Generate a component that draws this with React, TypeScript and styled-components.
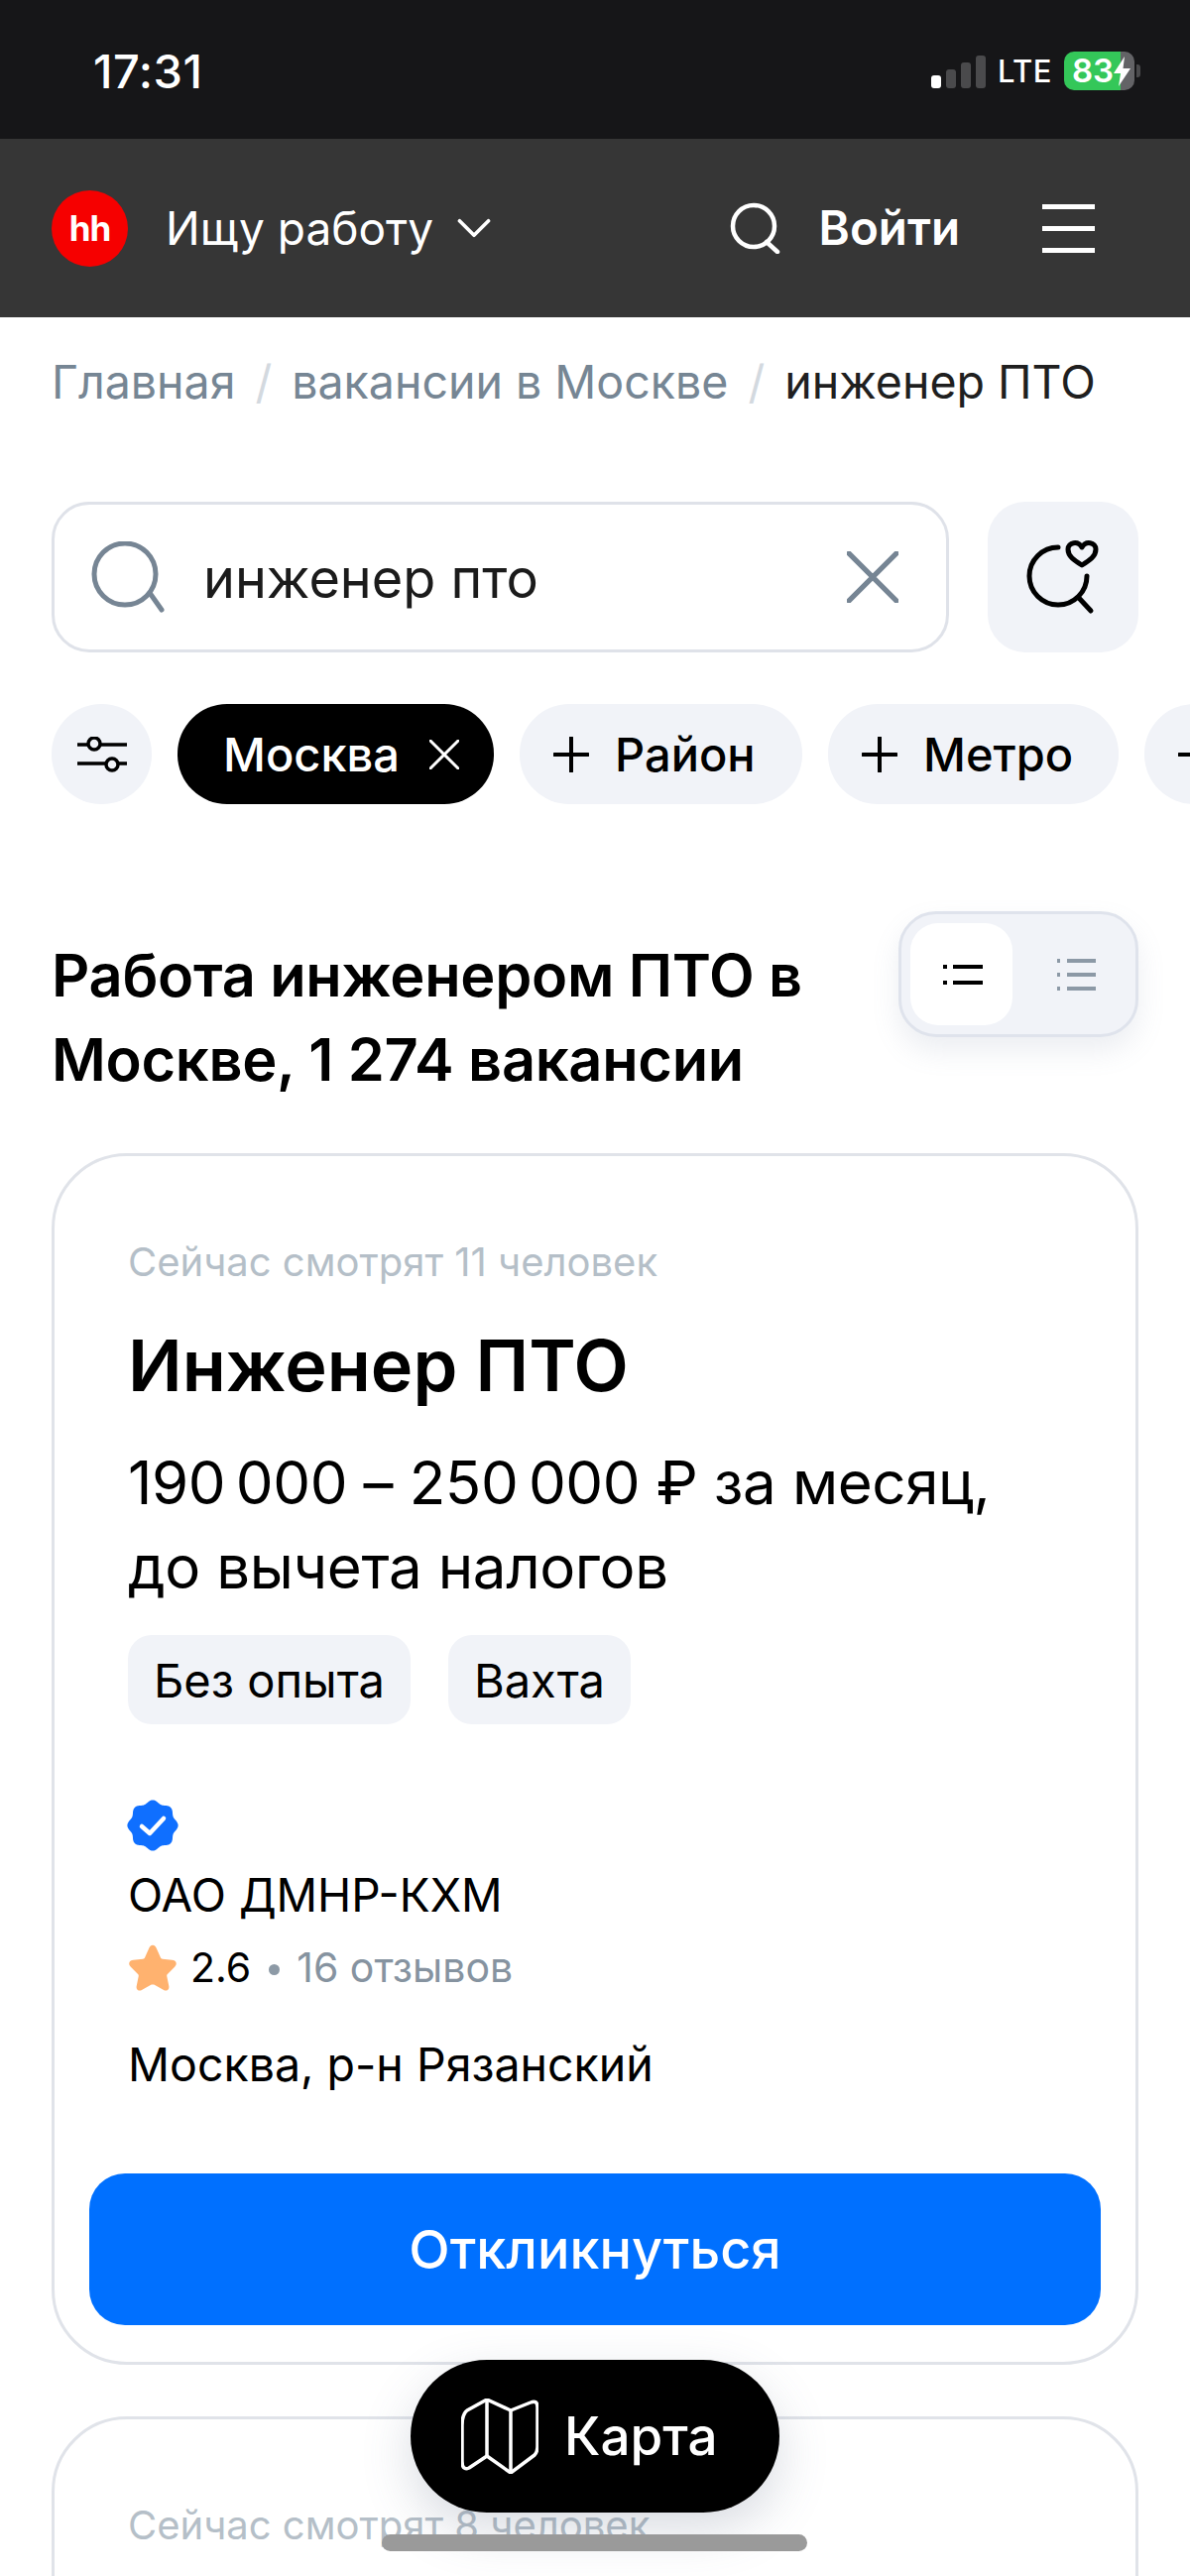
import React from "react";
import styled, { createGlobalStyle } from "styled-components";

const Global = createGlobalStyle`
  html, body { margin: 0; padding: 0; background: #fff; }
  * { box-sizing: border-box; }
`;

const Screen = styled.div`
  position: relative;
  width: 1200px;
  height: 2598px;
  overflow: hidden;
  background: #fff;
  color: #000;
  font-family: Inter, "Liberation Sans", sans-serif;
`;

const StatusBar = styled.div`
  height: 140px;
  background: #161618;
  color: #fff;
  display: flex;
  align-items: center;
  justify-content: space-between;
  padding: 0 50px 0 94px;
`;
const Time = styled.div`
  font-size: 47px;
  font-weight: 500;
  letter-spacing: 0.5px;
  line-height: 1;
  margin-top: 3px;
`;
const StatusRight = styled.div`
  display: flex;
  align-items: center;
  margin-top: 3px;
`;
const Bars = styled.div`
  display: flex;
  align-items: flex-end;
  gap: 5px;
  height: 34px;
  margin-right: 12px;
`;
const Bar = styled.div<{ $h: number; $on?: boolean }>`
  width: 10px;
  height: ${(p) => p.$h}px;
  border-radius: 3px;
  background: ${(p) => (p.$on ? "#fff" : "#4a4a4c")};
`;
const Lte = styled.div`
  font-size: 31px;
  font-weight: 500;
  letter-spacing: 0.5px;
  margin-right: 12px;
  line-height: 1;
`;
const Battery = styled.div`
  width: 71px;
  height: 39px;
  border-radius: 10px;
  background: linear-gradient(90deg, #34c759 0 57px, #636366 57px);
  display: flex;
  align-items: center;
  padding-left: 8px;
  font-size: 33px;
  font-weight: 600;
  line-height: 1;
`;
const BatteryNub = styled.div`
  width: 4px;
  height: 13px;
  margin-left: 2px;
  border-radius: 0 3px 3px 0;
  background: #4a4a4c;
`;

const NavBar = styled.header`
  height: 180px;
  background: #363636;
  color: #fff;
  display: flex;
  align-items: center;
  padding: 0 96px 0 52px;
`;
const Logo = styled.div`
  width: 77px;
  height: 77px;
  border-radius: 50%;
  background: #f60000;
  display: flex;
  align-items: center;
  justify-content: center;
  font-size: 35px;
  font-weight: 700;
  letter-spacing: -1px;
  margin-right: 38px;
`;
const NavLabel = styled.div`
  font-size: 46px;
  font-weight: 400;
  line-height: 1;
  margin-right: 24px;
`;
const NavRight = styled.div`
  margin-left: auto;
  display: flex;
  align-items: center;
`;
const Login = styled.div`
  font-size: 47.5px;
  font-weight: 600;
  line-height: 1;
  margin: 0 83px 0 38px;
`;
const Burger = styled.div`
  width: 53px;
  display: flex;
  flex-direction: column;
  gap: 17px;
`;
const BurgerLine = styled.div`
  height: 5px;
  background: #fff;
`;

const Crumbs = styled.nav`
  display: flex;
  align-items: center;
  padding: 36px 0 0 52px;
  height: 94px;
  font-size: 46.5px;
  line-height: 58px;
  white-space: nowrap;
`;
const Crumb = styled.span<{ $current?: boolean }>`
  color: ${(p) => (p.$current ? "#1f1f1f" : "#768694")};
`;
const CrumbSep = styled.span`
  color: #d3d9df;
  margin: 0 20px;
`;

const SearchRow = styled.div`
  display: flex;
  gap: 39px;
  padding: 92px 52px 0 52px;
`;
const SearchField = styled.div`
  flex: 1;
  height: 152px;
  border: 3px solid #dfe2e9;
  border-radius: 38px;
  display: flex;
  align-items: center;
  padding: 0 48px 0 37px;
`;
const SearchText = styled.div`
  flex: 1;
  margin-left: 39px;
  padding-top: 4px;
  font-size: 54px;
  line-height: 1;
  color: #1b1b1b;
`;
const FavButton = styled.div`
  width: 152px;
  height: 152px;
  border-radius: 38px;
  background: #f1f3f8;
  display: flex;
  align-items: center;
  justify-content: center;
`;

const Chips = styled.div`
  display: flex;
  gap: 26px;
  padding: 52px 0 0 52px;
  white-space: nowrap;
`;
const IconChip = styled.div`
  flex: none;
  width: 101px;
  height: 101px;
  border-radius: 50px;
  background: #f1f3f8;
  display: flex;
  align-items: center;
  justify-content: center;
`;
const Chip = styled.div<{ $dark?: boolean; $w: number }>`
  flex: none;
  width: ${(p) => p.$w}px;
  height: 101px;
  border-radius: 50px;
  background: ${(p) => (p.$dark ? "#000" : "#f1f3f8")};
  color: ${(p) => (p.$dark ? "#fff" : "#000")};
  display: flex;
  align-items: center;
  gap: ${(p) => (p.$dark ? 30 : 26)}px;
  padding-left: ${(p) => (p.$dark ? 46 : 34)}px;
  font-size: 47px;
  font-weight: 500;
  line-height: 1;
`;

const HeadingRow = styled.div`
  display: flex;
  justify-content: space-between;
  padding: 108px 52px 0 52px;
`;
const Heading = styled.h1`
  margin: 22px 0 0;
  font-size: 59.5px;
  font-weight: 600;
  line-height: 85px;
  letter-spacing: -0.3px;
`;
const ViewSwitch = styled.div`
  width: 242px;
  height: 127px;
  border: 3px solid #dfe3ec;
  border-radius: 38px;
  background: #f1f3f8;
  padding: 9px;
  display: flex;
  box-shadow: 0 14px 28px rgba(120, 135, 165, 0.14);
`;
const ViewOption = styled.div<{ $active?: boolean }>`
  flex: none;
  width: ${(p) => (p.$active ? 103 : 115)}px;
  height: 103px;
  border-radius: 28px;
  background: ${(p) => (p.$active ? "#fff" : "transparent")};
  display: flex;
  align-items: center;
  justify-content: ${(p) => (p.$active ? "center" : "flex-end")};
  padding: ${(p) => (p.$active ? "0 0 0 3px" : "0 31px 0 0")};
`;

const Cards = styled.div`
  display: flex;
  flex-direction: column;
  gap: 52px;
  padding: 52px 52px 0 52px;
`;
const Card = styled.article<{ $tail?: boolean }>`
  border: 3px solid #e0e3e9;
  border-radius: 76px;
  padding: 84px 35px 37px;
  flex: none;
  min-height: ${(p) => (p.$tail ? "400px" : "0")};
`;
const CardBody = styled.div`
  padding: 0 0 0 39px;
`;
const Watching = styled.div`
  font-size: 40px;
  line-height: 46px;
  color: #b5bfc8;
`;
const Title = styled.h2`
  margin: 37px 0 0;
  font-size: 72px;
  font-weight: 600;
  line-height: 88px;
`;
const Salary = styled.div`
  margin-top: 32px;
  font-size: 60px;
  line-height: 85px;
  font-weight: 400;
  letter-spacing: -0.4px;
`;
const Tags = styled.div`
  display: flex;
  gap: 38px;
  margin-top: 26px;
`;
const Tag = styled.div`
  height: 90px;
  border-radius: 24px;
  background: #f1f3f8;
  padding: 0 26px;
  display: flex;
  align-items: center;
  font-size: 47px;
  line-height: 1;
`;
const Verified = styled.svg`
  display: block;
  margin-top: 76px;
  margin-left: -1px;
`;
const Company = styled.div`
  margin-top: 16px;
  font-size: 46px;
  line-height: 56px;
`;
const RatingRow = styled.div`
  display: flex;
  align-items: center;
  margin-top: 17px;
  margin-left: -1px;
  height: 56px;
  font-size: 41px;
  line-height: 1;
`;
const RatingValue = styled.span`
  margin-left: 12px;
`;
const RatingDot = styled.span`
  width: 11px;
  height: 11px;
  border-radius: 50%;
  background: #8d9aa6;
  margin: 4px 17px 0 18px;
`;
const Reviews = styled.span`
  color: #8693a0;
`;
const Location = styled.div`
  margin-top: 42px;
  font-size: 46.5px;
  line-height: 56px;
`;
const Apply = styled.div`
  margin-top: 82px;
  height: 153px;
  border-radius: 36px;
  background: #0070ff;
  color: #fff;
  display: flex;
  align-items: center;
  justify-content: center;
  font-size: 54px;
  font-weight: 500;
  line-height: 1;
`;

const MapPill = styled.div`
  position: absolute;
  left: 414px;
  top: 2380px;
  width: 372px;
  height: 154px;
  border-radius: 77px;
  background: #000;
  color: #fff;
  display: flex;
  align-items: center;
  gap: 26px;
  padding-left: 51px;
  font-size: 53px;
  font-weight: 500;
  box-shadow: 0 18px 50px rgba(80, 95, 125, 0.22);
`;
const HomeIndicator = styled.div`
  position: absolute;
  left: 385px;
  top: 2556px;
  width: 429px;
  height: 17px;
  border-radius: 9px;
  background: #9a9a9a;
`;

function scallopPath(cx: number, cy: number, r: number, amp: number, n: number) {
  const pts: string[] = [];
  for (let i = 0; i <= 240; i++) {
    const a = (i / 240) * Math.PI * 2 - Math.PI / 2;
    const rr = r + amp * Math.cos(n * (a + Math.PI / 2));
    pts.push(`${(cx + rr * Math.cos(a)).toFixed(2)} ${(cy + rr * Math.sin(a)).toFixed(2)}`);
  }
  return "M" + pts.join("L") + "Z";
}

const Cross = ({ size, color, width }: { size: number; color: string; width: number }) => (
  <svg width={size} height={size} viewBox="0 0 50 50" fill="none">
    <path d="M2 2L48 48M48 2L2 48" stroke={color} strokeWidth={width} strokeLinecap="round" />
  </svg>
);
const Plus = () => (
  <svg width={36} height={36} viewBox="0 0 36 36" fill="none">
    <path d="M18 1V35M1 18H35" stroke="#000" strokeWidth={4} strokeLinecap="round" />
  </svg>
);

export default function App() {
  return (
    <Screen>
      <Global />
      <StatusBar>
        <Time>17:31</Time>
        <StatusRight>
          <Bars>
            <Bar $h={13} $on />
            <Bar $h={19} />
            <Bar $h={26} />
            <Bar $h={33} />
          </Bars>
          <Lte>LTE</Lte>
          <Battery>
            83
            <svg width={17} height={30} viewBox="0 0 17 30">
              <path d="M11 0L0 17H7L5 30L17 12H9.5Z" fill="#fff" />
            </svg>
          </Battery>
          <BatteryNub />
        </StatusRight>
      </StatusBar>

      <NavBar>
        <Logo>hh</Logo>
        <NavLabel>Ищу работу</NavLabel>
        <svg width={34} height={20} viewBox="0 0 36 22" fill="none">
          <path d="M2 3L18 19L34 3" stroke="#fff" strokeWidth={4} strokeLinecap="round" strokeLinejoin="round" />
        </svg>
        <NavRight>
          <svg width={52} height={52} viewBox="0 0 52 52" fill="none">
            <circle cx="24" cy="24" r="21" stroke="#fff" strokeWidth={4.5} />
            <path d="M37 40L48 50" stroke="#fff" strokeWidth={4.5} strokeLinecap="round" />
          </svg>
          <Login>Войти</Login>
          <Burger>
            <BurgerLine />
            <BurgerLine />
            <BurgerLine />
          </Burger>
        </NavRight>
      </NavBar>

      <Crumbs>
        <Crumb>Главная</Crumb>
        <CrumbSep>/</CrumbSep>
        <Crumb>вакансии в Москве</Crumb>
        <CrumbSep>/</CrumbSep>
        <Crumb $current>инженер ПТО</Crumb>
      </Crumbs>

      <SearchRow>
        <SearchField>
          <svg width={74} height={72} viewBox="0 0 74 72" fill="none">
            <circle cx="34" cy="33" r="31" stroke="#768594" strokeWidth={5} />
            <path d="M59 52L71 69" stroke="#768594" strokeWidth={5} strokeLinecap="round" />
          </svg>
          <SearchText>инженер пто</SearchText>
          <Cross size={52} color="#768594" width={5} />
        </SearchField>
        <FavButton>
          <svg width={76} height={76} viewBox="0 0 76 76" fill="none">
            <path
              d="M33 8A29 29 0 1 0 62 37M53 58L66 72"
              stroke="#000"
              strokeWidth={5}
              strokeLinecap="round"
            />
            <path
              d="M57 26C49 21 43 17 43 10C43 3 53 1 57 8C61 1 71 3 71 10C71 17 65 21 57 26Z"
              stroke="#000"
              strokeWidth={5}
              strokeLinejoin="round"
            />
          </svg>
        </FavButton>
      </SearchRow>

      <Chips>
        <IconChip>
          <svg width={50} height={36} viewBox="0 0 50 36" fill="none" stroke="#000" strokeWidth={3.5}>
            <path d="M0 8H10M24 8H50M0 27H28M42 27H50" />
            <circle cx="17" cy="7" r="6" />
            <circle cx="35" cy="28" r="6" />
          </svg>
        </IconChip>
        <Chip $dark $w={319}>
          Москва
          <Cross size={30} color="#fff" width={5} />
        </Chip>
        <Chip $w={285}>
          <Plus />
          Район
        </Chip>
        <Chip $w={293}>
          <Plus />
          Метро
        </Chip>
        <Chip $w={240}>
          <Plus />
        </Chip>
      </Chips>

      <HeadingRow>
        <Heading>
          Работа инженером ПТО в
          <br />
          Москве, 1 274 вакансии
        </Heading>
        <ViewSwitch>
          <ViewOption $active>
            <svg width={42} height={24} viewBox="0 0 42 24" fill="none" stroke="#000" strokeWidth={4}>
              <path d="M11 4H41M11 20H41M1 4H5M1 20H5" />
            </svg>
          </ViewOption>
          <ViewOption>
            <svg width={40} height={34} viewBox="0 0 40 34" fill="none" stroke="#8c99a6" strokeWidth={4}>
              <path d="M11 3H40M11 17H40M11 31H40M1 3H4M1 17H4M1 31H4" />
            </svg>
          </ViewOption>
        </ViewSwitch>
      </HeadingRow>

      <Cards>
        <Card>
          <CardBody>
            <Watching>Сейчас смотрят 11 человек</Watching>
            <Title>Инженер ПТО</Title>
            <Salary>
              190{"\u2009"}000 – 250{"\u2009"}000 ₽ за месяц,
              <br />
              до вычета налогов
            </Salary>
            <Tags>
              <Tag>Без опыта</Tag>
              <Tag>Вахта</Tag>
            </Tags>
            <Verified width={52} height={52} viewBox="0 0 52 52">
              <path d={scallopPath(26, 26, 24, 1.6, 8)} fill="#0f6fff" />
              <path d="M15 27L23 34L37 19" fill="none" stroke="#fff" strokeWidth={4.5} strokeLinecap="round" strokeLinejoin="round" />
            </Verified>
            <Company>ОАО ДМНР-КХМ</Company>
            <RatingRow>
              <svg width={52} height={50} viewBox="0 0 24 23">
                <path
                  d="M12 1.2C12.9 1.2 13.4 1.9 13.8 2.8L15.6 6.9C15.8 7.4 16.1 7.6 16.6 7.7L21 8.2C23 8.4 23.6 10 22.2 11.4L19 14.6C18.6 15 18.5 15.3 18.6 15.8L19.5 20.2C19.9 22 18.5 23 16.9 22L13 19.8C12.4 19.5 11.6 19.5 11 19.8L7.1 22C5.5 23 4.1 22 4.5 20.2L5.4 15.8C5.5 15.3 5.4 15 5 14.6L1.8 11.4C.4 10 1 8.4 3 8.2L7.4 7.7C7.9 7.6 8.2 7.4 8.4 6.9L10.2 2.8C10.6 1.9 11.1 1.2 12 1.2Z"
                  fill="#ffb26f"
                />
              </svg>
              <RatingValue>2.6</RatingValue>
              <RatingDot />
              <Reviews>16 отзывов</Reviews>
            </RatingRow>
            <Location>Москва, р-н Рязанский</Location>
          </CardBody>
          <Apply>Откликнуться</Apply>
        </Card>
        <Card $tail>
          <CardBody>
            <Watching>Сейчас смотрят 8 человек</Watching>
          </CardBody>
        </Card>
      </Cards>

      <MapPill>
        <svg width={78} height={76} viewBox="0 0 78 76" fill="none" stroke="#fff" strokeWidth={3.5} strokeLinejoin="round">
          <path d="M6 12Q1 16 1 27V63Q1 73 8 70L26 58L50 75L74 57Q77 54 77 48V9Q77 1 70 4L50 12L26 1Z" />
          <path d="M26 1V58M50 12V75" />
        </svg>
        Карта
      </MapPill>
      <HomeIndicator />
    </Screen>
  );
}
